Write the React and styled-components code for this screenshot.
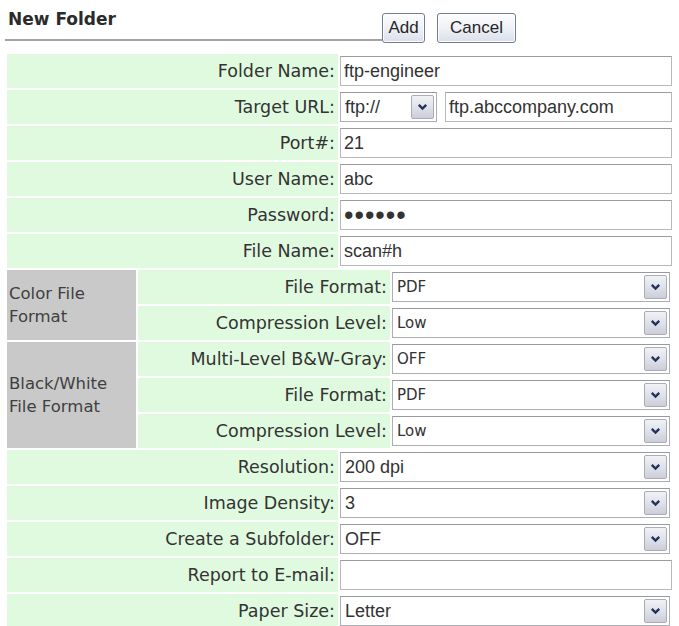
import styled, { createGlobalStyle } from "styled-components";

const GlobalStyle = createGlobalStyle`
  *, *::before, *::after {
    box-sizing: border-box;
  }

  html, body {
    margin: 0;
    background: #ffffff;
  }

  body {
    font-family: "DejaVu Sans", Verdana, sans-serif;
    color: #333333;
  }
`;

const Page = styled.div`
  padding: 0 7px 0 5px;
  width: 679px;
`;

const Header = styled.div`
  display: flex;
  align-items: flex-start;
  height: 54px;
`;

const TitleBar = styled.div`
  width: 377px;
  height: 41px;
  padding-left: 3px;
  border-bottom: 2px solid #a3a3a3;
  font-size: 17px;
  font-weight: bold;
  line-height: 39px;
  color: #2b2b2b;
`;

const Button = styled.button`
  margin: 13px 0 0 ${(p) => p.$gap}px;
  width: ${(p) => p.$width}px;
  height: 30px;
  padding: 0;
  border: 1px solid #6f7c93;
  border-radius: 3px;
  background: linear-gradient(#fdfdfe 0%, #eef1f6 50%, #d9dfeb 100%);
  box-shadow: inset 0 0 0 1px #ffffff;
  font-family: "Liberation Sans", Arial, sans-serif;
  font-size: 17px;
  color: #262626;
`;

const Form = styled.div`
  display: flex;
  flex-direction: column;
  gap: 2px;
  margin-left: 2px;
  width: 665px;
`;

const Row = styled.div`
  display: grid;
  grid-template-columns: ${(p) => p.$labelWidth}px minmax(0, 1fr);
  column-gap: 2px;
  height: 34px;
`;

const Label = styled.div`
  display: flex;
  align-items: center;
  justify-content: flex-end;
  padding-right: 3px;
  background: #e0fae0;
  font-size: 17.5px;
  color: #333333;
  white-space: nowrap;
`;

const Cell = styled.div`
  display: flex;
  align-items: center;
  gap: 8px;
  min-width: 0;
  background: #ffffff;
`;

const TextInput = styled.input`
  flex: 1 1 0;
  width: 0;
  min-width: 0;
  height: 30px;
  padding: 0 3px;
  border: 1px solid #b7b9bd;
  border-top-color: #9a9ca0;
  background: #ffffff;
  font-family: "Liberation Sans", Arial, sans-serif;
  font-size: ${(p) => (p.type === "password" ? 27 : 18)}px;
  letter-spacing: ${(p) => (p.type === "password" ? 1 : 0)}px;
  color: #333333;
  outline: none;
`;

const SelectBox = styled.div`
  display: flex;
  align-items: center;
  flex: ${(p) => (p.$width ? "none" : "1 1 0")};
  width: ${(p) => (p.$width ? `${p.$width}px` : "0")};
  height: 30px;
  margin-right: ${(p) => (p.$width ? 0 : 2)}px;
  padding: 2px 2px 2px 4px;
  border: 1px solid #abaeb4;
  border-top-color: #979a9f;
  background: #ffffff;
`;

const SelectValue = styled.span`
  flex: 1;
  font-family: ${(p) =>
    p.$small
      ? `"DejaVu Sans", Verdana, sans-serif`
      : `"Liberation Sans", Arial, sans-serif`};
  font-size: ${(p) => (p.$small ? 15 : 18)}px;
  color: #333333;
  white-space: nowrap;
`;

const ArrowButton = styled.span`
  display: flex;
  align-items: center;
  justify-content: center;
  width: 23px;
  height: 100%;
  border: 1px solid #a9adbb;
  border-radius: 2px;
  background: linear-gradient(#f1f2f6 0%, #dcdee6 60%, #cbced8 100%);
`;

const Group = styled.div`
  display: grid;
  grid-template-columns: 129px minmax(0, 1fr);
  column-gap: 2px;
`;

const GroupTitle = styled.div`
  display: flex;
  align-items: center;
  padding: 0 6px 0 2px;
  background: #c9c9c9;
  font-size: 16.5px;
  line-height: 23px;
  color: #3f3f3f;
`;

const GroupRows = styled.div`
  display: flex;
  flex-direction: column;
  gap: 2px;
`;

const Chevron = () => (
  <svg width="11" height="8" viewBox="0 0 11 8">
    <path
      d="M1.8 1.8 L5.5 5.5 L9.2 1.8"
      fill="none"
      stroke="#22315e"
      strokeWidth="2.4"
    />
  </svg>
);

const Select = ({ value, width, small }) => (
  <SelectBox $width={width}>
    <SelectValue $small={small}>{value}</SelectValue>
    <ArrowButton>
      <Chevron />
    </ArrowButton>
  </SelectBox>
);

const TOP_LABEL = 331;
const GROUP_LABEL = 252;

const colorRows = [
  ["File Format:", "PDF"],
  ["Compression Level:", "Low"],
];

const bwRows = [
  ["Multi-Level B&W-Gray:", "OFF"],
  ["File Format:", "PDF"],
  ["Compression Level:", "Low"],
];

const GroupBlock = ({ title, rows }) => (
  <Group>
    <GroupTitle>{title}</GroupTitle>
    <GroupRows>
      {rows.map(([label, value], i) => (
        <Row key={i} $labelWidth={GROUP_LABEL}>
          <Label>{label}</Label>
          <Cell>
            <Select value={value} small />
          </Cell>
        </Row>
      ))}
    </GroupRows>
  </Group>
);

export default function App() {
  return (
    <>
      <GlobalStyle />
      <Page>
        <Header>
          <TitleBar>New Folder</TitleBar>
          <Button $gap={0} $width={43}>Add</Button>
          <Button $gap={12} $width={79}>Cancel</Button>
        </Header>

        <Form>
          <Row $labelWidth={TOP_LABEL}>
            <Label>Folder Name:</Label>
            <Cell>
              <TextInput readOnly value="ftp-engineer" />
            </Cell>
          </Row>
          <Row $labelWidth={TOP_LABEL}>
            <Label>Target URL:</Label>
            <Cell>
              <Select value="ftp://" width={97} />
              <TextInput readOnly value="ftp.abccompany.com" />
            </Cell>
          </Row>
          <Row $labelWidth={TOP_LABEL}>
            <Label>Port#:</Label>
            <Cell>
              <TextInput readOnly value="21" />
            </Cell>
          </Row>
          <Row $labelWidth={TOP_LABEL}>
            <Label>User Name:</Label>
            <Cell>
              <TextInput readOnly value="abc" />
            </Cell>
          </Row>
          <Row $labelWidth={TOP_LABEL}>
            <Label>Password:</Label>
            <Cell>
              <TextInput readOnly type="password" value="abcdef" />
            </Cell>
          </Row>
          <Row $labelWidth={TOP_LABEL}>
            <Label>File Name:</Label>
            <Cell>
              <TextInput readOnly value="scan#h" />
            </Cell>
          </Row>

          <GroupBlock title="Color File Format" rows={colorRows} />
          <GroupBlock title="Black/White File Format" rows={bwRows} />

          <Row $labelWidth={TOP_LABEL}>
            <Label>Resolution:</Label>
            <Cell>
              <Select value="200 dpi" />
            </Cell>
          </Row>
          <Row $labelWidth={TOP_LABEL}>
            <Label>Image Density:</Label>
            <Cell>
              <Select value="3" />
            </Cell>
          </Row>
          <Row $labelWidth={TOP_LABEL}>
            <Label>Create a Subfolder:</Label>
            <Cell>
              <Select value="OFF" />
            </Cell>
          </Row>
          <Row $labelWidth={TOP_LABEL}>
            <Label>Report to E-mail:</Label>
            <Cell>
              <TextInput readOnly value="" />
            </Cell>
          </Row>
          <Row $labelWidth={TOP_LABEL}>
            <Label>Paper Size:</Label>
            <Cell>
              <Select value="Letter" />
            </Cell>
          </Row>
        </Form>
      </Page>
    </>
  );
}
